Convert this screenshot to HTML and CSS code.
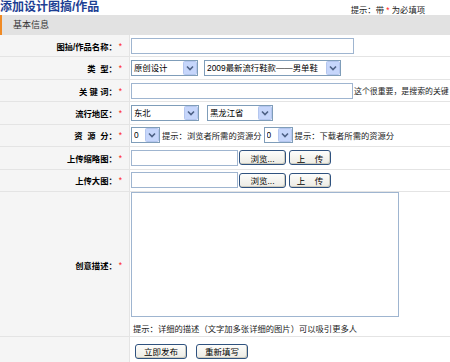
FILE: index.html
```html
<!DOCTYPE html>
<html lang="zh-CN">
<head>
    <meta charset="UTF-8">
    <title>添加设计图搞/作品</title>
    <link rel="stylesheet" href="styles.css">
</head>
<body>
    <div class="page">
        <div class="title-bar">
            <h1>添加设计图搞/作品</h1>
            <span class="must-tip">提示：带 <em>*</em> 为必填项</span>
        </div>

        <div class="section-head">基本信息</div>

        <form class="work-form">
            <div class="row">
                <label class="cell-label">图搞/作品名称：<em>*</em></label>
                <div class="cell-field"><input type="text" class="txt txt-name"></div>
            </div>
            <div class="row">
                <label class="cell-label">类&nbsp;&nbsp;型：<em>*</em></label>
                <div class="cell-field">
                    <select class="sel sel-type"><option>原创设计</option></select>
                    <select class="sel sel-cat"><option>2009最新流行鞋款——男单鞋</option></select>
                </div>
            </div>
            <div class="row">
                <label class="cell-label">关&nbsp;键&nbsp;词：<em>*</em></label>
                <div class="cell-field">
                    <input type="text" class="txt txt-key"><span class="tip tip-key">这个很重要，是搜索的关键</span>
                </div>
            </div>
            <div class="row">
                <label class="cell-label">流行地区：<em>*</em></label>
                <div class="cell-field">
                    <select class="sel sel-area"><option>东北</option></select>
                    <select class="sel sel-prov"><option>黑龙江省</option></select>
                </div>
            </div>
            <div class="row">
                <label class="cell-label">资&nbsp;&nbsp;源&nbsp;&nbsp;分：<em>*</em></label>
                <div class="cell-field">
                    <select class="sel sel-num"><option>0</option></select>
                    <span class="tip">提示：浏览者所需的资源分</span>
                    <select class="sel sel-num"><option>0</option></select>
                    <span class="tip">提示：下载者所需的资源分</span>
                </div>
            </div>
            <div class="row">
                <label class="cell-label">上传缩略图：<em>*</em></label>
                <div class="cell-field">
                    <input type="text" class="txt txt-file">
                    <button type="button" class="btn btn-browse">浏览...</button>
                    <button type="button" class="btn btn-upload">上&nbsp;&nbsp;&nbsp;&nbsp;传</button>
                </div>
            </div>
            <div class="row">
                <label class="cell-label">上传大图：<em>*</em></label>
                <div class="cell-field">
                    <input type="text" class="txt txt-file">
                    <button type="button" class="btn btn-browse">浏览...</button>
                    <button type="button" class="btn btn-upload">上&nbsp;&nbsp;&nbsp;&nbsp;传</button>
                </div>
            </div>
            <div class="row row-desc">
                <label class="cell-label">创意描述：<em>*</em></label>
                <div class="cell-field">
                    <textarea class="desc"></textarea>
                    <span class="tip">提示：详细的描述（文字加多张详细的图片）可以吸引更多人</span>
                </div>
            </div>
            <div class="row row-actions">
                <div class="cell-label"></div>
                <div class="cell-field">
                    <button type="submit" class="btn btn-main">立即发布</button>
                    <button type="reset" class="btn btn-main">重新填写</button>
                </div>
            </div>
        </form>
    </div>
</body>
</html>
```

FILE: styles.css
```css
* {
    margin: 0;
    padding: 0;
    box-sizing: border-box;
}

body {
    font-family: "Liberation Sans", "Noto Sans CJK SC", sans-serif;
    font-size: 8.3px;
    color: #000;
    background-color: #fff;
    overflow: hidden;
}

.page {
    width: 450px;
    overflow: hidden;
}

.title-bar {
    height: 15px;
    display: flex;
    align-items: center;
    justify-content: space-between;
    padding-right: 25px;
}

.title-bar h1 {
    font-size: 12px;
    font-weight: bold;
    color: #1d3f94;
    line-height: 15px;
}

.must-tip {
    color: #222;
    padding-top: 3px;
}

.must-tip em,
.cell-label em {
    font-style: normal;
    color: #f22;
}

.section-head {
    height: 20px;
    line-height: 20px;
    background-color: #e2e2e2;
    border-left: 2px solid #f08a24;
    padding-left: 11px;
    color: #333;
    font-size: 9px;
}

.row {
    display: flex;
    height: 22.43px;
    border-bottom: 1px solid #e4e4e4;
}

.cell-label {
    width: 130px;
    flex-shrink: 0;
    display: flex;
    align-items: center;
    justify-content: flex-end;
    padding-right: 7px;
    background-color: #f5f5f5;
    border-right: 1px solid #e4e4e4;
    font-weight: bold;
    white-space: nowrap;
}

.cell-label em {
    font-weight: normal;
    margin-left: 2px;
}

.cell-field {
    flex: 1;
    display: flex;
    align-items: center;
    padding-left: 1px;
    white-space: nowrap;
    overflow: hidden;
}

.tip {
    color: #222;
    flex-shrink: 0;
}

.tip-key {
    font-size: 7.9px;
}

.txt {
    height: 16px;
    border: 1px solid #9fb5d0;
    background-color: #fff;
    font-size: 9px;
    flex-shrink: 0;
}

.txt-name {
    width: 223px;
}

.txt-key {
    width: 222px;
    margin-right: 1px;
}

.txt-file {
    width: 107px;
}

.sel {
    appearance: none;
    -webkit-appearance: none;
    height: 16px;
    border: 1px solid #7f9db9;
    background-color: #fff;
    background-image: url("data:image/svg+xml;utf8,<svg xmlns='http://www.w3.org/2000/svg' width='14' height='14'><rect x='0.5' y='0.5' width='13' height='13' rx='1' fill='%23c6d6fb' stroke='%23b4c6ee'/><path d='M4 5.5 L7 8.5 L10 5.5' fill='none' stroke='%234d6185' stroke-width='1.6'/></svg>");
    background-repeat: no-repeat;
    background-position: right 0 center;
    padding: 0 15px 0 2px;
    font-family: inherit;
    font-size: 8.4px;
    color: #000;
    flex-shrink: 0;
}

.sel-type {
    width: 67px;
    margin-right: 6px;
}

.sel-cat {
    width: 137px;
}

.sel-area {
    width: 68px;
    margin-right: 8px;
}

.sel-prov {
    width: 66px;
}

.sel-num {
    width: 29px;
    margin-right: 2px;
}

.sel-num + .tip {
    margin-right: 2px;
}

.btn {
    height: 15px;
    font-family: inherit;
    font-size: 8.5px;
    color: #000;
    background: linear-gradient(#fdfdfb, #ecebe4);
    border: 1px solid #2f527f;
    border-radius: 3px;
    box-shadow: inset -1px -1px 0 #cdcbbe;
    flex-shrink: 0;
}

.btn-browse {
    width: 47px;
    margin-left: 1px;
    margin-right: 3px;
}

.btn-upload {
    width: 42px;
}

.row-desc {
    height: 145px;
}

.row-desc .cell-label {
    padding-top: 2px;
}

.row-desc .cell-field {
    flex-direction: column;
    align-items: flex-start;
    justify-content: flex-start;
    padding-top: 0;
}

.desc {
    width: 268px;
    height: 125px;
    border: 1px solid #9fb5d0;
    resize: none;
    flex-shrink: 0;
}

.row-desc .tip {
    margin-top: 5px;
    margin-left: 2px;
}

.row-actions {
    height: 30px;
    border-bottom: none;
}

.row-actions .cell-field {
    align-items: flex-start;
    padding-top: 7px;
    padding-left: 5px;
}

.btn-main {
    width: 52px;
    height: 15px;
    margin-right: 9px;
}
```
